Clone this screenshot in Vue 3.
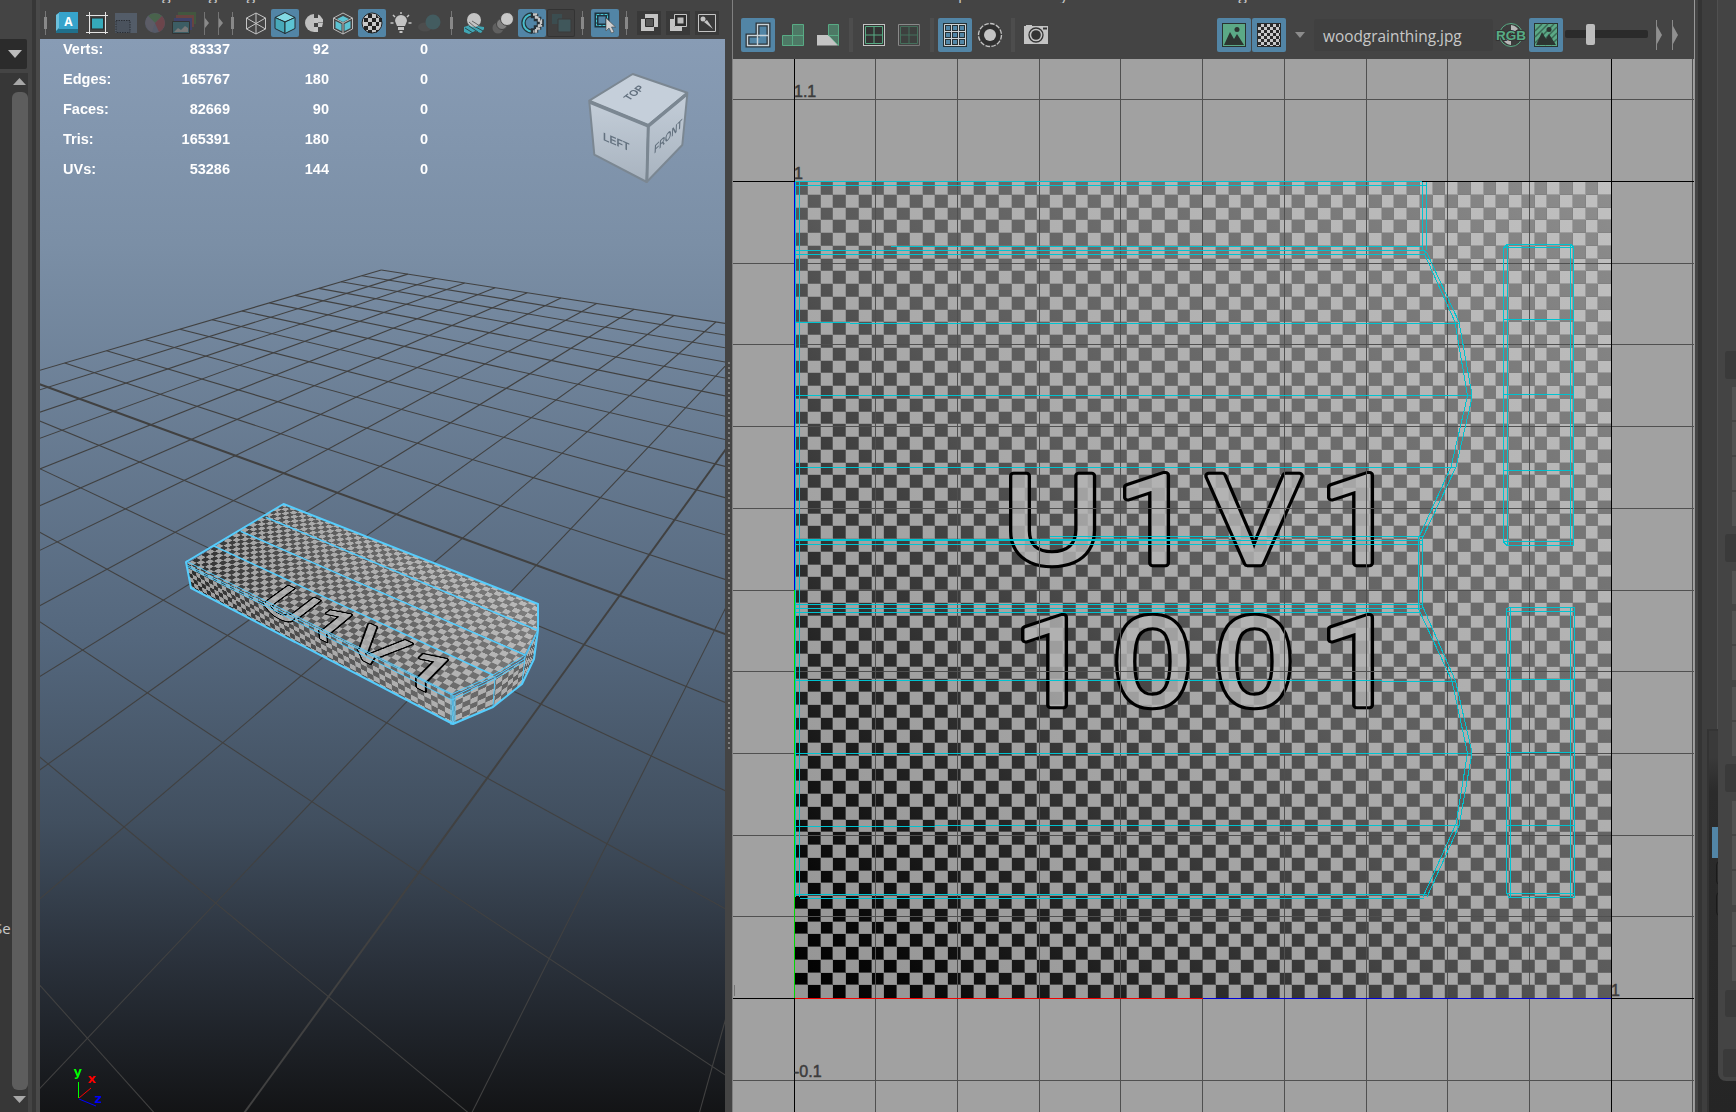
<script setup>
const stats = [
  ['Verts:', '83337', '92', '0'],
  ['Edges:', '165767', '180', '0'],
  ['Faces:', '82669', '90', '0'],
  ['Tris:', '165391', '180', '0'],
  ['UVs:', '53286', '144', '0'],
]

// Sections of the docked toolkit: header bars and button groups, as [kind, gap above, height]
const toolkit = [
  ['head', 351, 28], ['keys', 8, 33], ['keys', 2, 33], ['keys', 2, 33], ['keys', 2, 34],
  ['head', 8, 28], ['keys', 9, 33], ['keys', 7, 33], ['keys', 2, 34], ['keys', 7, 33], ['keys', 2, 34],
  ['head', 8, 28], ['keys', 9, 33], ['keys', 2, 33], ['keys', 2, 34], ['keys', 7, 33], ['keys', 2, 34],
  ['head', 9, 27], ['wide', 32, 28],
].map(([kind, gap, h]) => ({ kind, style: { marginTop: gap + 'px', height: h + 'px' } }))

// Projective map that sends four source points to four target points.
function homography(src, dst) {
  const m = []
  src.forEach(([x, y], k) => {
    const [X, Y] = dst[k]
    m.push([x, y, 1, 0, 0, 0, -x * X, -y * X, X])
    m.push([0, 0, 0, x, y, 1, -x * Y, -y * Y, Y])
  })
  for (let c = 0; c < 8; c++) {
    let p = c
    for (let r = c + 1; r < 8; r++) if (Math.abs(m[r][c]) > Math.abs(m[p][c])) p = r
    const t = m[c]
    m[c] = m[p]
    m[p] = t
    for (let r = 0; r < 8; r++) {
      if (r === c) continue
      const f = m[r][c] / m[c][c]
      for (let k = c; k < 9; k++) m[r][k] -= f * m[c][k]
    }
  }
  return m.map((row, k) => row[8] / row[k])
}

// Ground grid, in viewport pixels
const ground = homography(
  [[0, 0], [0, 10], [11, 0], [17, 12]],
  [[341.3, 231], [675.9, 283], [24.7, 324], [288.5, 957.7]],
)
const depth = (i, j) => ground[6] * i + ground[7] * j + 1
const project = (i, j) => {
  const w = depth(i, j)
  return [(ground[0] * i + ground[1] * j + ground[2]) / w, (ground[3] * i + ground[4] * j + ground[5]) / w]
}
const gridLines = []
for (let k = 0; k <= 24; k++) {
  for (const at of [(t) => [k, t], (t) => [t, k]]) {
    if (depth(...at(0)) < 0.03) continue
    let end = 24
    while (end > 0 && depth(...at(end)) < 0.03) end -= 0.1
    const a = project(...at(0))
    const b = project(...at(end))
    gridLines.push({ x1: a[0], y1: a[1], x2: b[0], y2: b[1], axis: k === 12 })
  }
}

// Checker texture, 64 x 64 cells in 816 px
const edge = (n) => Math.round(n * 12.75)
let dark = ''
let seams = ''
for (let r = 0; r < 64; r++) {
  for (let c = 0; c < 64; c++) {
    if ((r + c) % 2 === 0) dark += `M${edge(c)} ${edge(r)}H${edge(c + 1)}V${edge(r + 1)}H${edge(c)}z`
  }
  if (r) seams += `M${edge(r)} 0v816M0 ${edge(r)}h816`
}

const uvGridX = [81, 163, 245, 326, 408, 490, 572, 653, 735, 817, 898].map((x) => x + 61)
const uvGridY = [99, 263, 344, 426, 508, 590, 671, 753, 835, 916, 1080].map((y) => y - 59)

// Faces of the slab: texture region, its corners and where they land in the viewport
function face(box, quad, clip) {
  const [x, y, w, h] = box
  const a = homography([[0, 0], [w, 0], [w, h], [0, h]], quad)
  const matrix = [a[0], a[3], 0, a[6], a[1], a[4], 0, a[7], 0, 0, 1, 0, a[2], a[5], 0, 1]
  return {
    box: box.join(' '),
    style: {
      width: w + 'px',
      height: h + 'px',
      transform: `matrix3d(${matrix.join(',')})`,
      clipPath: clip ? `polygon(${clip.map(([px, py]) => `${px - x}px ${py - y}px`).join(',')})` : 'none',
    },
  }
}
const backL = [243.3, 465]
const backR = [498, 565]
const frontL = [147, 525]
const frontR = [412.3, 656]
const topMap = homography([[0, 68], [628, 68], [626, 358], [0, 358]], [backL, backR, frontR, frontL])
const mapTop = (x, y) => {
  const w = topMap[6] * x + topMap[7] * y + 1
  return [(topMap[0] * x + topMap[1] * y + topMap[2]) / w, (topMap[3] * x + topMap[4] * y + topMap[5]) / w]
}
const faces = [
  face([0, 68, 680, 290], [mapTop(0, 68), mapTop(680, 68), mapTop(680, 358), mapTop(0, 358)],
    [[0, 68], [628, 68], [662, 140], [674, 214], [657, 286], [626, 358], [0, 358]]),
  face([0, 358, 626, 70], [frontL, frontR, [413, 685.5], [151, 549]]),
  face([714, 498, 66, 70], [[455, 639], [414, 658], [413, 685], [453, 668]]),
  face([714, 568, 66, 70], [[484, 621], [455, 639], [453, 668], [482, 645]]),
  face([714, 638, 66, 70], [[497, 594], [484, 621], [482, 645], [494, 618]]),
]
</script>

<template>
  <div class="app">
    <svg width="0" height="0" class="defs">
      <defs>
        <linearGradient id="lightG" gradientUnits="userSpaceOnUse" x1="0" y1="816" x2="816" y2="0">
          <stop offset="0" stop-color="#959595" /><stop offset="1" stop-color="#c0c0c0" />
        </linearGradient>
        <linearGradient id="darkG" gradientUnits="userSpaceOnUse" x1="0" y1="816" x2="816" y2="0">
          <stop offset="0" stop-color="#000" /><stop offset=".08" stop-color="#080808" /><stop offset=".5" stop-color="#5a5a5a" /><stop offset="1" stop-color="#8e8e8e" />
        </linearGradient>
        <g id="glyphs" stroke-linejoin="round" text-anchor="middle">
          <g font-family="'Liberation Sans', Arial, sans-serif" font-size="126">
            <text transform="translate(257.5 380.500) scale(1.09 1)">U</text>
            <text transform="translate(459 380.500) scale(1.09 1)">V</text>
            <text transform="translate(357.5 523) scale(1.09 1)">0</text>
            <text transform="translate(459.5 523) scale(1.09 1)">0</text>
          </g>
          <g font-family="Roboto, sans-serif" font-size="122">
            <text transform="translate(360 380.500) scale(1.13 1)">1</text>
            <text transform="translate(564 380.500) scale(1.13 1)">1</text>
            <text transform="translate(258 523) scale(1.13 1)">1</text>
            <text transform="translate(564 523) scale(1.13 1)">1</text>
          </g>
        </g>
        <mask id="ring" maskUnits="userSpaceOnUse" x="0" y="0" width="816" height="816">
          <use href="#glyphs" fill="#fff" stroke="#fff" stroke-width="8.4" />
          <use href="#glyphs" fill="#000" stroke="#000" stroke-width="2.4" />
        </mask>
        <mask id="body" maskUnits="userSpaceOnUse" x="0" y="0" width="816" height="816">
          <use href="#glyphs" fill="#fff" stroke="#fff" stroke-width="4" />
        </mask>
        <symbol id="tex" viewBox="0 0 816 816" overflow="visible">
          <rect width="816" height="816" fill="url(#lightG)" />
          <path :d="dark" fill="url(#darkG)" shape-rendering="crispEdges" />
          <path :d="seams" transform="translate(-.5 -.5)" stroke="#7c7c7c" stroke-opacity=".5" fill="none" shape-rendering="crispEdges" />
          <rect width="816" height="816" fill="#b4b4b4" fill-opacity=".8" mask="url(#body)" />
          <rect width="816" height="816" fill="#000" mask="url(#ring)" />
        </symbol>
      </defs>
    </svg>

    <aside class="left">
      <div class="drop"><svg width="16" height="10"><path d="M1 1h14l-7 8z" fill="#bdbdbd" /></svg></div>
      <div class="pane">
        <span class="clip-label">Se</span>
        <div class="scroll">
          <svg width="16" height="19"><path d="M1 12h13l-6.500-7z" fill="#a8a8a8" /></svg>
          <div class="thumb"></div>
          <svg width="16" height="22"><path d="M1 6h13l-6.500 7z" fill="#a8a8a8" /></svg>
        </div>
      </div>
    </aside>
    <div class="gutter"></div>

    <main class="view">
      <div class="menu"><span class="m1">Shading</span><span class="m2">Lighting</span></div>
      <div class="bar bar3d">
        <i class="sep"></i>
        <b><svg viewBox="0 0 28 28"><path d="M2 6l4-3v15h18v6H2z" fill="#20708c" /><path d="M2 6l4-3v15l-4 4z" fill="#6cc0dc" /><rect x="5" y="3" width="19" height="17" fill="#36a3cb" /><text x="14.500" y="17" class="ia">A</text></svg></b>
        <b><svg viewBox="0 0 28 28"><path d="M3 6.500h22M3 23.500h22M6.500 3v22M22.500 3v22" stroke="#e4e4e4" fill="none" /><rect x="8.500" y="9" width="12" height="11" fill="#35a9ba" stroke="#2b2b2b" /></svg></b>
        <b><svg viewBox="0 0 28 28"><path d="M3 4h22v20H3z" fill="#535c68" /><path d="M4 11.500h14v12H4z" fill="#4a525d" stroke="#2a2e34" stroke-dasharray="1.500 1" /></svg></b>
        <b><svg viewBox="0 0 28 28"><circle cx="14" cy="14" r="10" fill="#555a68" /><path d="M14 14L7 7a10 10 0 0 1 14 0z" fill="#49634c" /><path d="M14 14l7-7a10 10 0 0 1-3 16z" fill="#6c454b" /><path d="M14 14l-7-7a10 10 0 0 0 4 16z" fill="#5c5c66" /></svg></b>
        <b><svg viewBox="0 0 28 28"><path d="M8 3h18v12H8z" fill="#42573f" /><path d="M6 6h18v12H6z" fill="#684341" /><path d="M4 9h18v12H4z" fill="#3f4269" /><path d="M2.500 12.500h17v12h-17z" fill="#3c5d64" stroke="#333" /><path d="M4 23l4-4 3 2 4-4 3 2v4z" fill="#777" /></svg></b>
        <div class="arrows"><svg width="43" height="28"><path d="M6.500 3v23M20.500 3v23" stroke="#747474" /><path d="M7 9l4 5-4 5zM21 9l4 5-4 5z" fill="#8a8a8a" /><path d="M34.500 3v23" stroke="#777" /><path d="M33 8h3v12h-3z" fill="#888" /></svg></div>
        <b><svg viewBox="0 0 28 28" fill="none" stroke="#c4c4c4"><path d="M14 4l9.500 5v11L14 25l-9.500-5V9zM14 4v21M4.500 9l19 11M23.500 9l-19 11" /></svg></b>
        <b class="on"><svg viewBox="0 0 28 28" stroke="#222b2f" stroke-linejoin="round"><path d="M14 3.500l10 5L14 13 4 8.500z" fill="#83d9e4" /><path d="M4 8.500L14 13v11.500L4 19.500z" fill="#48a9b9" /><path d="M24 8.500L14 13v11.500l10-5z" fill="#5cc3d3" /></svg></b>
        <b><svg viewBox="0 0 28 28"><path d="M14 5a9 9 0 0 0 0 18z" fill="#bfbfbf" /><path d="M14 9h4v5h-4zM18 5.500l2 1 3 4v3h-5V9.500zM18 18h-4v5h4zM18 14h5l-1 4h-4z" fill="#c4c4c4" /></svg></b>
        <b><svg viewBox="0 0 28 28" stroke-linejoin="round"><path d="M14 4l9.500 5v11L14 25l-9.500-5V9z" fill="#444" stroke="#bbb" /><path d="M14 7l6 3-6 3-6-3zM6.500 12l6 3v7l-6-3zM21.500 12l-6 3v7l6-3z" fill="#5cc3d3" /><path d="M4.500 9l9.500 5 9.500-5M14 14v11" fill="none" stroke="#bbb" /></svg></b>
        <b class="on"><svg viewBox="0 0 28 28"><circle cx="14" cy="14" r="10" fill="#c8c8c8" stroke="#222" /><path d="M10 5h4v4h-4zM18 5l3 4h-3zM6 9h4v4H6zM14 9h4v4h-4zM21 9h3v4h-3zM10 13h4v4h-4zM18 13h3v4h-3zM6 17h4v4H6zM14 17h4v4h-4zM10 21h4v3h-4zM18 21h3l-3 3z" fill="#222" /></svg></b>
        <b><svg viewBox="0 0 28 28"><path d="M10 17l-2-5a6 6 0 1 1 12 0l-2 5zM11 18h6v3h-6zM12.500 22h3v2h-3z" fill="#c4c4c4" /><path d="M14 3v2M6 6l2 2M22 6l-2 2M3.500 14h3M21.500 14h3" stroke="#c4c4c4" stroke-width="1.500" /></svg></b>
        <b><svg viewBox="0 0 28 28"><ellipse cx="9" cy="18" rx="7" ry="4.500" fill="#4d4d4d" /><circle cx="17" cy="13" r="7.500" fill="#435c60" /></svg></b>
        <i class="sep"></i>
        <b><svg viewBox="0 0 28 28"><path d="M4 18l6-2 14 2 0 2-3 4-6-2-6 3-5-2z" fill="#40a6b4" /><path d="M5 19l8 5M9 17l9 6M14 17l9 5" stroke="#2d4a4e" /><circle cx="14" cy="11" r="7" fill="#c4c4c4" /><path d="M9 13l7 6M12 12l8 5" stroke="#666" /></svg></b>
        <b><svg viewBox="0 0 28 28"><circle cx="9" cy="19" r="5.500" fill="#606060" /><circle cx="13" cy="15" r="5.500" fill="#7f7f7f" stroke="#444" /><circle cx="18" cy="10" r="6.500" fill="#c8c8c8" stroke="#444" /></svg></b>
        <b class="on"><svg viewBox="0 0 28 28" fill="none"><path d="M14 5.500a8.500 8.500 0 1 0 0 17" stroke="#25383e" stroke-width="4.500" /><path d="M14 5.500a8.500 8.500 0 1 0 0 17" stroke="#48bccb" stroke-width="2" /><path d="M15 4v3h3v3h3v2.500h2.500v3h-2.500v3h-3v3h-3v3" stroke="#263036" stroke-width="4.500" /><path d="M15 5.500h3v3h3v3h2v5h-2v3h-3v3h-3" stroke="#c6c6c6" stroke-width="2.400" stroke-dasharray="4 .6" /></svg></b>
        <b class="off"><svg viewBox="0 0 28 28"><path d="M5 5h10v10H5z" fill="#3b4d50" /><path d="M11 10h13v13H11z" fill="#40575b" stroke="#3a3a3a" /></svg></b>
        <i class="sep"></i>
        <b class="on"><svg viewBox="0 0 28 28" fill="none"><rect x="5.500" y="5.500" width="11" height="11" stroke="#1d343f" stroke-width="4" /><rect x="5.500" y="5.500" width="11" height="11" stroke="#49c7d6" stroke-dasharray="3 1" /><path d="M15 9v13l3-3 2.500 5 2.500-1-2.500-5h4z" fill="#d0d0d0" stroke="#444" stroke-width=".6" /></svg></b>
        <i class="sep"></i>
        <b class="dk"><svg viewBox="0 0 28 28"><path d="M10 5h13v13h-4v4H6V10h4z" fill="#c4c4c4" /><path d="M10.500 9.500h8v8h-8z" fill="#555" stroke="#2c2c2c" /></svg></b>
        <b class="dk"><svg viewBox="0 0 28 28"><path d="M6 10h4v8h8v4H6z" fill="#c4c4c4" /><path d="M10.500 5.500h12v12h-12z" fill="#2c2c2c" stroke="#c4c4c4" /><path d="M13.500 8.500h6v6h-6z" fill="#bbb" /></svg></b>
        <b class="dk"><svg viewBox="0 0 28 28"><path d="M5.500 5.500h17v17h-17z" fill="none" stroke="#c4c4c4" /><circle cx="10" cy="10" r="2.500" fill="#c4c4c4" /><path d="M11 13l3-2 6 9z" fill="#c4c4c4" /></svg></b>
      </div>

      <div class="stage">
        <svg class="ground" width="685" height="1073">
          <line v-for="(l, k) in gridLines" :key="k" :x1="l.x1" :y1="l.y1" :x2="l.x2" :y2="l.y2" :class="{ axis: l.axis }" />
        </svg>
        <svg v-for="(f, k) in faces" :key="'f' + k" class="face" :viewBox="f.box" :style="f.style">
          <use href="#tex" x="0" y="0" width="816" height="816" />
        </svg>
        <svg class="ground" width="685" height="1073" fill="none" stroke="#55ccfc" stroke-linejoin="round">
          <path stroke-width="2" d="M243.500 465L498 565V591L494 620 482 645 453 668 413 685 151 549 146 523z" />
          <path stroke-width="1.500" d="M225.700 478.300L497 591M200.700 492.300L485 616M173.300 506.700L453 636" />
          <path stroke-width="1" d="M146 522L412 655 453 636 485 616 498 591M147 526L414 657 454 638 484 620 496 596M148 528L412 661 455 640 485 622M411 655V686M415 657V685M455 638L453 668M485 618L482 645" />
          <path stroke-width="1.500" d="M413 657V685" />
        </svg>

        <table class="stats">
          <tbody><tr v-for="s in stats" :key="s[0]"><th>{{ s[0] }}</th><td>{{ s[1] }}</td><td>{{ s[2] }}</td><td>{{ s[3] }}</td></tr></tbody>
        </table>

        <svg class="cube" width="110" height="120" viewBox="585 68 110 120">
          <defs><linearGradient id="cf" x1="0" y1="0" x2="0" y2="1"><stop offset="0" stop-color="#c3cdd8" /><stop offset="1" stop-color="#a8b3bf" /></linearGradient></defs>
          <g stroke="#7b8792" stroke-width="2" stroke-linejoin="round">
            <path d="M632.700 74l54.600 18.700-39 32.300-59-24.300z" fill="#c5cfda" />
            <path d="M589.300 101.500l59 24.500-1.600 56-52.400-27.300z" fill="url(#cf)" />
            <path d="M687.300 94l-39 32-1.600 56 35.600-37z" fill="url(#cf)" />
            <path d="M589.300 102l59 24 38.500-32" fill="none" stroke-width="3.500" /><path d="M648.300 126l-1.400 55" stroke-width="3" />
          </g>
          <g class="ct">
            <text transform="matrix(.66 -.52 .75 .45 629 101)">TOP</text>
            <text transform="matrix(.88 .38 0 .95 603 140)">LEFT</text>
            <text transform="matrix(.68 -.66 -.05 1 654 154)">FRONT</text>
          </g>
        </svg>

        <svg class="axes" width="60" height="50" viewBox="65 1064 60 50">
          <path d="M78.500 1082v16" stroke="#0f0" /><path d="M79 1098l12-10" stroke="#f00" /><path d="M79 1099l17 7" stroke="#00f" />
          <g class="ax"><text x="73.500" y="1076" fill="#0f0">y</text><text x="88" y="1083" fill="#f00">x</text><text x="94" y="1103" fill="#00f">z</text></g>
        </svg>
      </div>
    </main>

    <div class="splitter"><i></i></div>

    <section class="uv">
      <div class="menu"><span class="m3">p</span><span class="m4">Modify</span><span class="m5">Image</span></div>
      <div class="bar baruv">
        <b class="on"><svg viewBox="0 0 34 34" fill="none"><path d="M16.500 6.500h11v21h-21v-10h10z" stroke="#2b3338" stroke-width="4" /><path d="M16.500 6.500h11v21h-21v-10h10zM16.500 17.500h11M16.500 17.500v10" stroke="#c9d3da" stroke-width="1.400" /></svg></b>
        <b><svg viewBox="0 0 34 34"><path d="M16.500 6.500h11v21h-21v-10h10zM16.500 17.500h11M16.500 17.500v10" fill="#4d7965" stroke="#58ab84" /></svg></b>
        <b><svg viewBox="0 0 34 34"><path d="M17.500 6.500h10v21l-10-10z" fill="#4d7965" stroke="#58ab84" /><path d="M6 17h11l10 10.500H6z" fill="#c4c4c4" /><path d="M17.500 17.500h10" stroke="#58ab84" /></svg></b>
        <i class="usep"></i>
        <b><svg viewBox="0 0 34 34" fill="none"><rect x="6.500" y="6.500" width="21" height="21" fill="#333" stroke="#c4c4c4" /><path d="M8.500 8.500h17v17h-17zM17 9v16M9 17h16" stroke="#58ab84" /></svg></b>
        <b><svg viewBox="0 0 34 34" fill="none"><path d="M27.500 6.500h-21v21" stroke="#8a8a8a" /><path d="M6.500 27.500h21v-21" stroke="#777" /><path d="M8.500 8.500h17v17h-17zM17 9v16M9 17h16" stroke="#45705c" fill="#3d403e" /></svg></b>
        <i class="usep"></i>
        <b class="on"><svg viewBox="0 0 34 34" fill="none"><path d="M6.500 6.500h21v21h-21zM13.500 6v22M20.500 6v22M6 13.500h22M6 20.500h22" stroke="#263035" stroke-width="3" /><path d="M6.500 6.500h21v21h-21zM13.500 6v22M20.500 6v22M6 13.500h22M6 20.500h22" stroke="#d0d4d6" /></svg></b>
        <b><svg viewBox="0 0 34 34"><circle cx="17" cy="17" r="10.500" fill="#303030" /><circle cx="17" cy="17" r="11.500" fill="none" stroke="#c4c4c4" stroke-width="1.300" stroke-dasharray="4.500 1.500" /><circle cx="17" cy="17" r="6" fill="#c4c4c4" /></svg></b>
        <i class="usep"></i>
        <b><svg viewBox="0 0 34 34"><path d="M5 8h2V7h6v1h16v18H5z" fill="#c4c4c4" /><circle cx="17" cy="17" r="7" fill="#c4c4c4" stroke="#333" stroke-width="1.300" /><circle cx="17" cy="17" r="4.800" fill="#333" /><path d="M24 9.500h4v2h-4z" fill="#333" /></svg></b>
        <span class="grow"></span>
        <b class="on"><svg viewBox="0 0 34 34"><rect x="5.500" y="5.500" width="23" height="23" fill="#5ba986" stroke="#29332f" /><circle cx="20" cy="11.500" r="2.500" fill="#2d3531" /><path d="M7 27l6-13 4 7 3-5 7 11z" fill="#2d3531" /></svg></b>
        <b class="on"><svg viewBox="0 0 34 34"><defs><pattern id="mini" width="6" height="6" patternUnits="userSpaceOnUse" x="6" y="6"><path d="M0 0h3v3H0zM3 3h3v3H3z" fill="#2b2b2b" /></pattern></defs><rect x="5.500" y="5.500" width="23" height="23" fill="#c9c9c9" stroke="#2b2b2b" /><rect x="6" y="6" width="22" height="22" fill="url(#mini)" /></svg></b>
        <span class="caret"><svg width="10" height="6"><path d="M0 0h10L5 6z" fill="#8c8c8c" /></svg></span>
        <span class="field">woodgrainthing.jpg</span>
        <b><svg viewBox="0 0 34 34" overflow="visible"><circle cx="17" cy="17" r="11.500" fill="#3c3c3c" stroke="#58ab84" /><path d="M17 7a10 10 0 0 1 7 4l-7 5zM17 27a10 10 0 0 1-7-4l7-5z" fill="#b8b8b8" /><text x="17" y="22" class="rgb">RGB</text></svg></b>
        <b class="on"><svg viewBox="0 0 34 34"><rect x="5.500" y="5.500" width="23" height="23" fill="#5ba986" stroke="#29332f" /><path d="M6 13l7-7M6 19L19 6M6 25L25 6M10 27L28 9M16 27l12-12M22 27l6-6" stroke="#3a6a55" stroke-width="1.500" /><circle cx="20" cy="11.500" r="2.500" fill="#2d3531" /><path d="M7 27l6-13 4 7 3-5 7 11z" fill="#2d3531" /></svg></b>
        <span class="slider"><i></i></span>
        <svg class="tail" width="34" height="34"><path d="M8.500 2v30M24.500 2v30" stroke="#8a8a8a" /><path d="M9 8l5 9-5 9zM25 8l5 9-5 9z" fill="#909090" /></svg>
      </div>
      <div class="canvas">
        <svg width="961" height="1053" class="uvsvg">
          <rect width="961" height="1053" fill="#a1a1a1" />
          <use href="#tex" x="62" y="123" width="816" height="816" />
          <g fill="#505050"><rect v-for="x in uvGridX" :key="'x' + x" :x="x" y="0" width="1" height="1053" /><rect v-for="y in uvGridY" :key="'y' + y" x="0" :y="y" width="961" height="1" /></g>
          <path d="M61.500 0v1053M878.500 0v1053M0 122.500h961M0 939.500h961" stroke="#000" />
          <path d="M61.500 123v408M470 939.500h408" stroke="#0000d8" /><path d="M61.500 531v408" stroke="#00d800" /><path d="M62 939.500h408" stroke="#f00000" />
          <g transform="translate(-733 -59)" fill="none" stroke="#00c3d0" shape-rendering="crispEdges">
            <path d="M795 181.500H1422M795 185.500H1426M1422.500 182v68M1426.500 182v68M891 246.500H1422M795 250.500H1424M795 254.500H1425M795 322.500H850M850 323.500H1459M795 395.500H1471M795 467.500H1456M1050 536.500H1422M795 539.500H1200M795 540.500H1422M795 544.500H1422M1418.500 536v74M1422.500 536v72M795 604.500H1422M795 608.500H1422M795 612.500H1420M795 680.500H1382M1382 681.500H1455M795 753.500H1471M795 826.500H935M935 825.500H1459M795 894.500H1427M800 898.500H1424M795.500 182V897M799.500 182V897" />
            <path d="M1423 250L1427 253 1459 322 1471.500 392V400L1456 467 1423 537M1424 253L1455 322 1467.500 396 1451 467 1419 537M1422 605L1455.500 681 1471.500 750V756L1459 826 1427 897M1419 610L1452 681 1467.500 753 1456 824 1423 897" />
            <path d="M1503.500 248V542L1507 545.500H1573.500V247L1571 244.500H1507zM1507.500 245V545M1570.500 245V545M1504 247.500H1573M1504 319.500H1573M1504 394.500H1573M1504 470.500H1573M1504 541.500H1573" />
            <path d="M1506.500 609V893.500L1509 897.500H1574.500V607.500H1509zM1510.500 608V897M1570.500 608V897M1507 611.500H1574M1507 679.500H1574M1507 752.500H1574M1507 825.500H1574M1507 893.500H1574" />
          </g>
          <g class="tick"><text x="61" y="38">1.1</text><text x="61" y="120">1</text><text x="61" y="1018">-0.1</text><text x="878" y="937">1</text><path d="M1.500 926v11" stroke="#444" /></g>
        </svg>
      </div>
    </section>

    <aside class="right">
      <div class="rail"></div>
      <div class="dock"></div>
      <div class="hidden"><i class="blue"></i><i></i><i></i></div>
      <div class="float"><i v-for="(t, n) in toolkit" :key="n" :class="t.kind" :style="t.style"></i></div>
    </aside>
  </div>
</template>

<style>
body { background: #444; overflow: hidden; }
</style>

<style scoped>
.app { display: flex; width: 1736px; height: 1112px; overflow: hidden; background: #444; font-family: "Open Sans", "Noto Sans", sans-serif; color: #c8c8c8; }
.defs { position: absolute; }
.left { width: 28px; flex: none; display: flex; flex-direction: column; }
.drop { margin-top: 39px; width: 27px; height: 30px; border-radius: 0 2px 2px 0; background: #2b2b2b; display: flex; align-items: center; justify-content: center; padding-left: 2px; box-sizing: border-box; }
.pane { margin-top: 4px; flex: 1; background: #373737; display: flex; justify-content: flex-end; position: relative; }
.clip-label { position: absolute; left: -6px; top: 845px; font-size: 15px; line-height: 20px; width: 17px; overflow: hidden; }
.scroll { width: 16px; display: flex; flex-direction: column; }
.thumb { flex: 1; background: #5d5d5d; border-radius: 6px; }
.gutter { width: 12px; flex: none; background: linear-gradient(90deg, #444 0 4px, #373737 4px 8px, #494949 8px); }
.view { width: 685px; flex: none; display: flex; flex-direction: column; }
.menu { height: 3px; flex: none; overflow: hidden; position: relative; font-size: 16px; line-height: 22px; }
.menu span { position: absolute; bottom: 0; margin-bottom: -1.500px; }
.m1 { left: 71px; } .m2 { left: 156px; } .m3 { left: 225px; } .m4 { left: 284px; } .m5 { left: 477px; }
.bar { display: flex; align-items: center; flex: none; }
.bar b { display: flex; justify-content: center; align-items: center; flex: none; }
.bar svg { display: block; }
.bar3d { height: 36px; padding-top: 4px; box-sizing: border-box; margin-left: -2px; }
.bar3d b { width: 28px; height: 28px; margin: 0 .5px; border-radius: 2px; }
.bar3d b svg { width: 28px; height: 28px; }
.on { background: #5285a6; }
.off { background: #404040; box-shadow: inset 0 0 0 1px #333; }
.bar3d .dk { background: linear-gradient(#393939, #393939) center / 24px 24px no-repeat; }
.sep { width: 15px; height: 24px; flex: none; background: linear-gradient(#888, #888) center / 3px 12px no-repeat, linear-gradient(#777, #777) center / 1px 24px no-repeat; }
.arrows { width: 43px; flex: none; overflow: hidden; }
.ia { font: bold 12px "Open Sans", sans-serif; fill: #fff; text-anchor: middle; }
.stage { position: relative; flex: 1; overflow: hidden; background: linear-gradient(#889cb5 0%, #7b8fa6 19%, #54677d 56%, #414f5f 73%, #2a313b 86%, #131416 100%); }
.ground { position: absolute; left: 0; top: 0; }
.ground line { stroke: #414141; stroke-width: 1.100; }
.ground line.axis { stroke-width: 2; }
.face { position: absolute; left: 0; top: 0; transform-origin: 0 0; overflow: hidden; }
.stats { position: absolute; left: 23px; top: -5px; border-collapse: collapse; font: bold 14.500px "Liberation Sans", Arial, sans-serif; color: #fff; }
.stats tr { height: 30px; }
.stats th, .stats td { padding: 0; text-align: right; }
.stats th { text-align: left; width: 67px; }
.stats td:nth-child(2) { width: 100px; }
.stats td:nth-child(3) { width: 99px; }
.stats td:nth-child(4) { width: 99px; }
.cube { position: absolute; left: 545px; top: 29px; }
.ct { font: bold 12px "Liberation Sans", Arial, sans-serif; fill: #63717f; }
.axes { position: absolute; left: 25px; top: 1025px; }
.ax { font: bold 13px "DejaVu Sans", sans-serif; }
.splitter { width: 7px; flex: none; border-right: 1px solid #808080; }
.splitter i { display: block; width: 2px; height: 388px; margin: 362px 0 0 3px; background: repeating-linear-gradient(#7d7d7d 0 2px, #444 2px 5px); }
.uv { width: 961px; flex: none; display: flex; flex-direction: column; }
.baruv { height: 56px; padding: 8px 0 0 7.500px; box-sizing: border-box; }
.baruv b { width: 34px; height: 34px; margin: 0 .5px; border-radius: 2px; }
.baruv b svg { width: 34px; height: 34px; }
.usep { width: 11px; height: 34px; flex: none; background: linear-gradient(#4d4d4d, #4d4d4d) center / 4px 34px no-repeat; }
.grow { width: 163px; flex: none; }
.caret { width: 27.500px; flex: none; padding-left: 8px; box-sizing: border-box; }
.field { width: 179px; height: 32px; line-height: 35px; flex: none; box-sizing: border-box; padding-left: 9px; background: #404040; border-radius: 3px; font-size: 15.400px; white-space: nowrap; }
.rgb { font: bold 13.500px "Liberation Sans", sans-serif; fill: #58ab84; stroke: #333; stroke-width: 2px; paint-order: stroke; text-anchor: middle; }
.slider { margin-left: 2px; width: 83px; height: 8px; flex: none; background: #2b2b2b; border-radius: 2px; margin-top: -2px; }
.slider i { display: block; width: 9px; height: 21px; margin: -6px 0 0 21px; background: #bdbdbd; border-radius: 2px; }
.tail { flex: none; }
.canvas { flex: 1; }
.uvsvg { display: block; }
.tick { font: 16px "Liberation Sans", Arial, sans-serif; fill: #3c3c3c; stroke: #3c3c3c; stroke-width: .5px; }
.right { width: 42px; flex: none; position: relative; overflow: hidden; display: flex; }
.rail { width: 24px; flex: none; background: linear-gradient(90deg, #999 0 1px, #444 1px 4px, #343434 4px 8px, #3e3e3e 8px 23px, #505050 23px); }
.dock { flex: 1; background: #434343; }
.hidden { position: absolute; left: 13px; top: 729px; width: 29px; height: 383px; background: linear-gradient(#3a3a3a 0 26px, #2b2b2b 60px, #252525); border-left: 2px solid #333; border-top: 2px solid #353535; box-sizing: border-box; padding: 96px 0 0 3px; }
.hidden i { display: block; height: 22px; margin: 3px 0 7px 4px; border: 1px solid #1a1a1a; border-radius: 4px; }
.hidden .blue { height: 29px; margin: 0; border-radius: 0; background: #5285a6; border-color: #5285a6; }
.float { position: absolute; left: 24px; top: -20px; width: 40px; height: 1101px; background: #444; border-radius: 8px; box-sizing: border-box; padding: 20px 0 0 7px; }
.float i { display: block; background: #3a3a3a; border-radius: 3px; }
.float .keys { margin-left: 7px; background: #525252; border-radius: 0; }
.float .wide { margin-left: -2px; }
</style>
